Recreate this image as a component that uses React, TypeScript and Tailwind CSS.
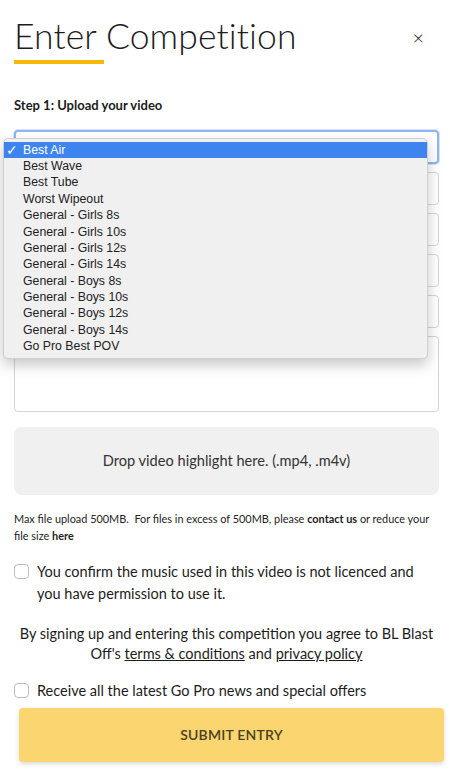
import { useState } from "react";

const categories = [
  "Best Air",
  "Best Wave",
  "Best Tube",
  "Worst Wipeout",
  "General - Girls 8s",
  "General - Girls 10s",
  "General - Girls 12s",
  "General - Girls 14s",
  "General - Boys 8s",
  "General - Boys 10s",
  "General - Boys 12s",
  "General - Boys 14s",
  "Go Pro Best POV",
];

export default function App() {
  const [selected, setSelected] = useState("Best Air");

  return (
    <div className="relative min-h-[779px] bg-white pl-[14px] pr-[11px] pt-[14px] font-['Lato',sans-serif] text-[#1c1c1c]">
      {/* Header */}
      <div className="flex items-start justify-between">
        <div>
          <h1 className="text-[35.5px] font-light leading-[44px] tracking-[0.1px]">Enter Competition</h1>
          <div className="mt-[2px] h-[4px] w-[90px] bg-[#f6b60a]" />
        </div>
        <button className="mr-[15px] mt-[13px] text-[20px] font-light leading-none text-[#222]" aria-label="Close">
          ×
        </button>
      </div>

      <h2 className="mt-[32px] text-[13px] font-bold">Step 1: Upload your video</h2>

      {/* Fields */}
      <div className="relative mt-[14px] flex flex-col gap-[8px]">
        <div className="h-[34px] rounded-[4px] border-2 border-[#8fb6ef] shadow-[0_0_0_1px_#d3e3fa]" />
        <div className="h-[33px] rounded-[4px] border border-[#d6d6d6]" />
        <div className="h-[33px] rounded-[4px] border border-[#d6d6d6]" />
        <div className="h-[33px] rounded-[4px] border border-[#d6d6d6]" />
        <div className="h-[33px] rounded-[4px] border border-[#d6d6d6]" />
        <div className="h-[76px] rounded-[4px] border border-[#d6d6d6]" />

        {/* Native select popup */}
        <ul className="absolute left-[-11px] top-[8px] w-[425px] rounded-[5px] border border-[#d0d0d0] bg-[#f0f0f0] py-[3px] font-['Liberation_Sans',sans-serif] text-[12.3px] text-[#222] shadow-[0_6px_14px_rgba(0,0,0,0.22)]">
          {categories.map((c) => (
            <li
              key={c}
              onClick={() => setSelected(c)}
              className={`relative flex h-[16.4px] items-center pl-[19px] leading-none ${
                c === selected ? "bg-[#3e84ee] text-white" : ""
              }`}
            >
              {c === selected && <span className="absolute left-[2px] text-[14px]">✓</span>}
              {c}
            </li>
          ))}
        </ul>
      </div>

      {/* Drop zone */}
      <div className="mt-[15px] flex h-[68px] items-center justify-center rounded-[8px] bg-[#f0f0f0] text-[14.6px] text-[#333]">
        Drop video highlight here. (.mp4, .m4v)
      </div>

      <p className="mt-[15px] text-[10.9px] leading-[17px] text-[#222]">
        Max file upload 500MB.&nbsp; For files in excess of 500MB, please <b>contact us</b> or reduce your file size{" "}
        <b>here</b>
      </p>

      <label className="mt-[17px] flex items-start gap-[8px]">
        <span className="mt-[3px] h-[15px] w-[15px] shrink-0 rounded-[4px] border border-[#bdbdbd] bg-white" />
        <span className="text-[14.5px] leading-[22px]">
          You confirm the music used in this video is not licenced and you have permission to use it.
        </span>
      </label>

      <p className="-mx-[4px] mt-[19px] text-center text-[14.5px] leading-[20px]">
        By signing up and entering this competition you agree to BL Blast Off's{" "}
        <span className="underline">terms &amp; conditions</span> and{" "}
        <span className="underline">privacy policy</span>
      </p>

      <label className="mt-[17px] flex items-center gap-[8px]">
        <span className="h-[15px] w-[15px] shrink-0 rounded-[4px] border border-[#bdbdbd] bg-white" />
        <span className="text-[14.5px] leading-[20px]">Receive all the latest Go Pro news and special offers</span>
      </label>

      <button className="ml-[5px] mt-[7px] flex h-[54px] w-[425px] items-center justify-center rounded-[4px] bg-[#fad570] text-[14px] font-semibold tracking-[0.2px] text-[#4a3f22] shadow-[0_2px_5px_rgba(0,0,0,0.15)]">
        SUBMIT ENTRY
      </button>
    </div>
  );
}
